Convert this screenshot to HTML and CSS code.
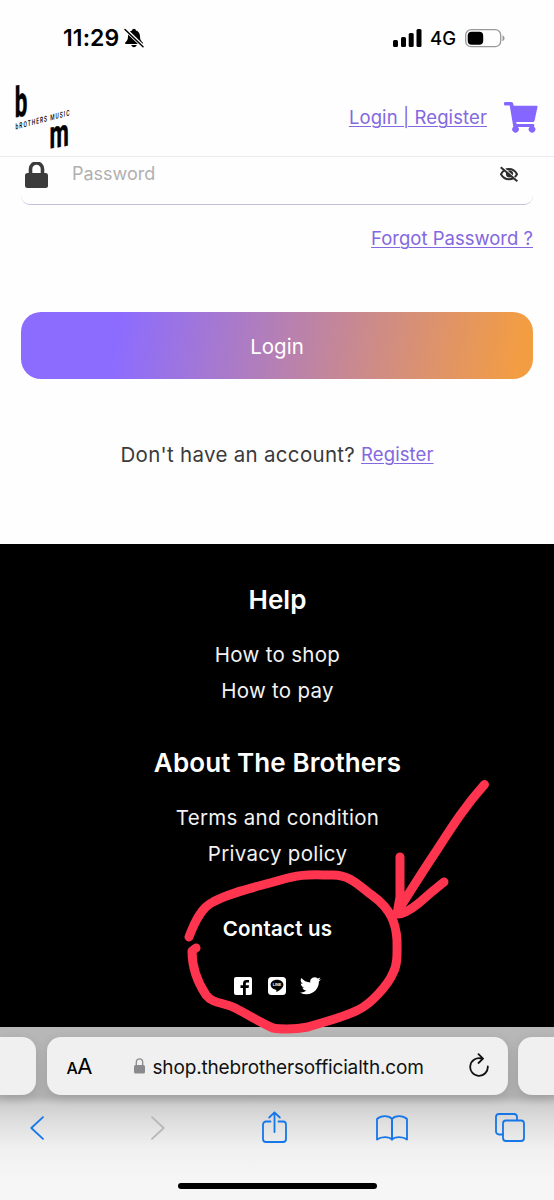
FILE: index.html
```html
<!DOCTYPE html>
<html lang="en">
<head>
<meta charset="utf-8">
<title>Brothers Music - Login</title>
<link rel="stylesheet" href="styles.css">
</head>
<body>
<div class="screen">
  <div class="status">
    <div class="status-left">
      <span class="time">11:29</span>
      <svg class="bell" viewBox="0 0 20 20"><path d="M10 .8c-1 0-1.800.7-1.900 1.700C5.300 3.300 4 5.500 4 8.500c0 3-1 4.400-2.700 6-.5.600-.3 1.500.7 1.500h16c1 0 1.200-.9.700-1.500-1.700-1.600-2.700-3-2.700-6 0-3-1.300-5.200-4.100-6C11.800 1.500 11 .8 10 .8zM7.300 17h5.400c-.3 1.300-1.300 2.200-2.700 2.200S7.600 18.300 7.300 17z"/><path d="M1.500 1.500l17.500 17" stroke="#fff" stroke-width="3.600"/><path d="M1 1.500l18 17.300" stroke="#000" stroke-width="1.500" stroke-linecap="round"/></svg>
    </div>
    <div class="status-right">
      <svg class="signal" viewBox="0 0 29 18"><rect x="0" y="11" width="5" height="7" rx="1.500"/><rect x="8" y="8" width="5" height="10" rx="1.500"/><rect x="15.700" y="4" width="5" height="14" rx="1.500"/><rect x="23.500" y="0" width="5" height="18" rx="1.500"/></svg>
      <span class="network">4G</span>
      <svg class="battery" viewBox="0 0 40 19"><rect x=".7" y=".7" width="35" height="17" rx="5.500" fill="none" stroke="#999" stroke-width="1.300"/><rect x="2.700" y="2.700" width="15.500" height="13" rx="4"/><path d="M37.500 6.300v6c1.200-.5 2-1.600 2-3s-.8-2.500-2-3z" fill="#999"/></svg>
    </div>
  </div>

  <header class="header">
    <svg class="logo" viewBox="0 0 60 68">
      <text class="logo-letter" transform="matrix(.66 -.1 0 1.230 -.3 35.300)" font-size="34">b</text>
      <text class="logo-name" transform="matrix(.65 -.17 0 1.080 .5 47.500)" textLength="83">bROTHERS MUSIC</text>
      <text class="logo-letter" transform="matrix(.62 -.1 0 1.080 34.500 66.500)" font-size="36">m</text>
    </svg>
    <div class="header-right">
      <a class="link auth">Login | Register</a>
      <svg class="cart" viewBox="0 0 34 31"><path d="M1.300 0h6.200q1.400 0 1.700 1.500L9.700 3.800H32.500q1.300 0 1 1.200l-3 13.700q-.3 1.300-1.700 1.300H12.200l.4 2h16.600q1.300 0 1.100 1.200l-.3 1.500a3.300 3.300 0 1 1-4.300.3H14a3.300 3.300 0 1 1-4.700-.2L5.700 3.400H1.300Q0 3.400 0 2.200v-1Q0 0 1.300 0z"/></svg>
    </div>
  </header>

  <main class="form">
    <div class="field">
      <svg class="lock" viewBox="0 0 23 26"><path d="M5.500 12V7a6 6 0 0 1 12 0v5" fill="none" stroke="#3b3b3b" stroke-width="3.600"/><rect y="11" width="23" height="15" rx="2.500"/></svg>
      <span class="placeholder">Password</span>
      <svg class="eye" viewBox="0 0 18 16"><path d="M1 8.200Q3.700 3 9 3t8 5.200q-2.700 5-8 5t-8-5z" fill="none" stroke="#2d2d2d" stroke-width="2"/><circle cx="9.500" cy="7.800" r="3.600"/><path d="M1.300.3l17 15" stroke="#fff" stroke-width="2"/><path d="M.7 1.200l16.600 14" stroke="#2d2d2d" stroke-width="2"/></svg>
    </div>
    <div class="forgot-row"><a class="link forgot">Forgot Password ?</a></div>
    <div class="login-button"><span>Login</span></div>
    <div class="signup"><span class="question">Don't have an account?</span><a class="link register">Register</a></div>
  </main>

  <footer class="footer">
    <h2 class="help">Help</h2>
    <p class="shop">How to shop</p>
    <p class="pay">How to pay</p>
    <h2 class="about">About The Brothers</h2>
    <p class="terms">Terms and condition</p>
    <p class="privacy">Privacy policy</p>
    <h3 class="contact">Contact us</h3>
    <div class="socials">
      <svg class="social" viewBox="0 0 18 18"><rect width="18" height="18" rx="2"/><path d="M9 18v-7H6.500V8.300H9V6.500C9 4 10.300 3 12.500 3H15v2.500h-1.700c-1 0-1.500.4-1.500 1.400v1.400H15l-.4 2.700h-2.800v7z" fill="#000"/></svg>
      <svg class="social" viewBox="0 0 18 18"><rect width="18" height="18" rx="3.500"/><path d="M9 2.800c-3.700 0-6.400 2.200-6.400 5 0 2.600 2.100 4.500 5.200 5 .7.100.7.500.5 2.300 3.200-1.400 7.100-4.300 7.100-7.300 0-2.800-2.700-5-6.400-5z" fill="#000"/><text class="line-word" x="9" y="9.200" textLength="8.600" lengthAdjust="spacingAndGlyphs">LINE</text></svg>
      <svg class="bird" viewBox="0 2.500 24 19.500"><path d="M23.950 4.570a10 10 0 0 1-2.820.77 4.960 4.960 0 0 0 2.160-2.720c-.950.550-2 .950-3.120 1.180a4.920 4.920 0 0 0-8.380 4.480C7.690 8.090 4.070 6.130 1.640 3.160a4.920 4.920 0 0 0 1.520 6.570 4.900 4.900 0 0 1-2.230-.61v.06a4.920 4.920 0 0 0 3.950 4.830 5 5 0 0 1-2.210.08 4.940 4.940 0 0 0 4.600 3.420A9.870 9.870 0 0 1 0 19.540a14 14 0 0 0 7.550 2.210c9.050 0 14-7.500 14-13.980 0-.21 0-.42-.02-.63a9.900 9.900 0 0 0 2.420-2.570z"/></svg>
    </div>
  </footer>

  <div class="browser">
    <div class="tabs">
      <div class="tab previous"></div>
      <div class="tab current">
        <span class="reader"><span class="small-a">A</span>A</span>
        <svg class="url-lock" viewBox="0 0 11 16"><path d="M2.300 8V4a3.200 3.200 0 0 1 6.400 0v4" fill="none" stroke="#8a8a8d" stroke-width="1.300"/><rect y="7" width="11" height="8.500" rx="1.500" fill="#8a8a8d"/></svg>
        <span class="url">shop.thebrothersofficialth.com</span>
        <svg class="reload" viewBox="0 0 20 24"><path d="M18.800 13.500A8.800 8.800 0 1 1 12.500 5.600M9.500 1.200L14 5.700 9.500 10" /></svg>
      </div>
      <div class="tab next"></div>
    </div>
    <div class="tools">
      <svg class="back" viewBox="0 0 14 24"><path d="M13 1.200L1.300 12 13 22.800"/></svg>
      <svg class="forward" viewBox="0 0 14 24"><path d="M1 1.200L12.700 12 1 22.800"/></svg>
      <svg class="share" viewBox="0 0 25 32"><path d="M8.500 10.500H4a3 3 0 0 0-3 3V28a3 3 0 0 0 3 3h17a3 3 0 0 0 3-3V13.500a3 3 0 0 0-3-3h-4.500M12.500 21V1.500M7.200 6.500l5.300-5.200 5.300 5.200"/></svg>
      <svg class="book" viewBox="0 0 32 26"><path d="M16 4C13 .3 5 .2 1 4v20.500c4-3.200 12-3.200 15 0 3-3.200 11-3.200 15 0V4C27 .2 19 .3 16 4zv20.500"/><path d="M16 4v20.500"/></svg>
      <svg class="windows" viewBox="0 0 30 29"><path d="M8 21.500H4a3 3 0 0 1-3-3V4a3 3 0 0 1 3-3h15a3 3 0 0 1 3 3v3"/><rect x="8" y="7.500" width="21" height="20.500" rx="3"/></svg>
    </div>
    <div class="home"></div>
  </div>

  <svg class="marker" viewBox="0 0 554 1200">
    <path d="M189 937C195 921 202 907 213 902C229 893 252 888 277 881C303 873 312 875 333 875C351 875 359 886 373 896C391 909 396 924 397 940C397 952 398 964 393 973C388 985 371 1004 358 1010C342 1018 320 1023 308 1027C293 1030 278 1029 273 1028C261 1023 247 1014 235 1008C223 1002 213 1004 206 995C196 980 192 964 192 951L196 948"/>
    <path d="M484.500 784.500C466 805 453 825 437 850Q423 871 399 909M400 857V897L397 914Q404 915 419 903Q430 893 444 882"/>
  </svg>
</div>
</body>
</html>
```
FILE: styles.css
```css
* { box-sizing: border-box; }
body { margin: 0; background: #fefefe; font-family: Inter, "Liberation Sans", sans-serif; }
svg { display: block; flex: none; }
h2, h3, p { margin: 0; white-space: nowrap; }
.screen { position: relative; width: 554px; height: 1200px; overflow: hidden; display: flex; flex-direction: column; }

.status { height: 76px; display: flex; justify-content: space-between; padding: 0 49px 0 63px; }
.status-left, .status-right { display: flex; align-items: center; height: 76px; }
.time { font-size: 23px; font-weight: 600; letter-spacing: .1px; }
.bell { width: 20px; height: 20px; margin-left: 5px; }
.signal { width: 29px; height: 18px; }
.network { font-size: 18.500px; font-weight: 500; margin: 0 9px 0 8.500px; }
.battery { width: 40px; height: 19px; }

.header { height: 81px; border-bottom: 1px solid #ececf0; display: flex; justify-content: space-between; padding: 6px 16px 0 15px; }
.logo { width: 60px; height: 68px; overflow: visible; }
.logo-letter { font-family: Roboto, sans-serif; font-weight: 700; stroke: #000; stroke-width: .5px; }
.logo-name { font-family: Roboto, sans-serif; font-size: 7.5px; font-weight: 500; }
.header-right { display: flex; align-items: center; height: 70px; }
.link { color: #8368df; text-decoration: underline; text-underline-offset: 2px; text-decoration-thickness: 1px; white-space: nowrap; }
.auth { font-size: 18.500px; letter-spacing: .1px; margin-right: 17px; }
.cart { width: 34px; height: 31px; fill: #8566ff; }

.form { height: 387px; padding: 0 21px; display: flex; flex-direction: column; }
.field { height: 48px; border-bottom: 1px solid #c5c0d8; border-radius: 0 0 9px 9px; display: flex; align-items: flex-start; padding: 5px 15px 0 4px; }
.lock { width: 23px; height: 26px; fill: #3b3b3b; }
.placeholder { flex: 1; margin-left: 24px; font-size: 18px; line-height: 24px; color: #b0b0b0; }
.eye { width: 18px; height: 16px; margin-top: 4px; fill: #2d2d2d; }
.forgot-row { height: 107px; display: flex; justify-content: flex-end; padding-top: 21px; }
.forgot { font-size: 18.500px; line-height: 24px; }
.login-button { height: 67px; border-radius: 20px; background: linear-gradient(98deg, #8c6cff 19%, #f39d43 97%); color: #fff; font-size: 20.500px; display: flex; align-items: center; justify-content: center; padding-top: 1px; }
.signup { height: 151px; display: flex; align-items: center; justify-content: center; gap: 6px; }
.question { font-size: 20.500px; color: #3a3a3a; letter-spacing: .3px; }
.register { font-size: 18.500px; letter-spacing: .1px; margin-top: -1px; }

.footer { height: 483px; background: #000; color: #fff; display: flex; flex-direction: column; align-items: center; padding: 40px 0 0 1px; }
.footer h2 { font-size: 26px; font-weight: 600; line-height: 32px; letter-spacing: .1px; }
.footer p { font-size: 20.500px; line-height: 36px; letter-spacing: .3px; color: #f2f2f2; }
.footer .shop { margin-top: 21px; }
.footer .about { margin-top: 38px; }
.footer .terms { margin-top: 21px; }
.footer .contact { font-size: 20.500px; font-weight: 600; line-height: 26px; margin-top: 44px; letter-spacing: .2px; }
.socials { display: flex; margin-top: 35px; gap: 15.500px; fill: #fff; }
.social { width: 18px; height: 18px; }
.bird { width: 21px; height: 18px; margin-left: -1px; }
.line-word { font: 700 3.500px "Liberation Sans", sans-serif; text-anchor: middle; }

.browser { height: 173px; background: linear-gradient(#b8b8b8 0, #b2b2b2 40%, #cfcfcf 45%, #e0e0e0 56%, #f0f0f0 70%, #f6f6f6 88%); display: flex; flex-direction: column; }
.tabs { height: 68px; padding-top: 10px; display: flex; gap: 10.500px; }
.tab { height: 58px; background: #f0f0f0; border-radius: 14px; box-shadow: 0 3px 12px rgba(0,0,0,.12); }
.previous { width: 36px; border-radius: 0 14px 14px 0; }
.next { width: 36px; border-radius: 14px 0 0 14px; }
.current { width: 461px; display: flex; align-items: center; padding: 2px 19px 0 20px; }
.reader { width: 26px; font-size: 22px; line-height: 26px; white-space: nowrap; letter-spacing: -.5px; }
.small-a { font-size: 16px; font-weight: 500; }
.url-lock { width: 11px; height: 16px; margin-left: 41px; margin-top: -3px; }
.url { flex: 1; margin-left: 8px; font-size: 19px; letter-spacing: -.16px; white-space: nowrap; color: #111; }
.reload { width: 20px; height: 24px; fill: none; stroke: #111; stroke-width: 1.800px; stroke-linecap: round; stroke-linejoin: round; margin-top: -4px; }
.tools { height: 88px; display: flex; align-items: flex-start; padding: 21px 29px 0 30px; fill: none; stroke: #1677e8; stroke-width: 1.800px; stroke-linecap: round; stroke-linejoin: round; }
.back, .forward { width: 14px; height: 24px; }
.forward { margin-left: 107px; stroke: #b7b7b7; }
.share { width: 25px; height: 32px; margin: -5px 0 0 97px; }
.book { width: 32px; height: 26px; margin: -1px 0 0 89px; }
.windows { width: 30px; height: 29px; margin: -3px 0 0 87px; }
.home { width: 199px; height: 6px; border-radius: 3px; background: #000; margin: 0 auto; }
.marker { position: absolute; inset: 0; width: 554px; height: 1200px; fill: none; stroke: #ff344e; stroke-width: 9px; stroke-linecap: round; stroke-linejoin: round; }
```
